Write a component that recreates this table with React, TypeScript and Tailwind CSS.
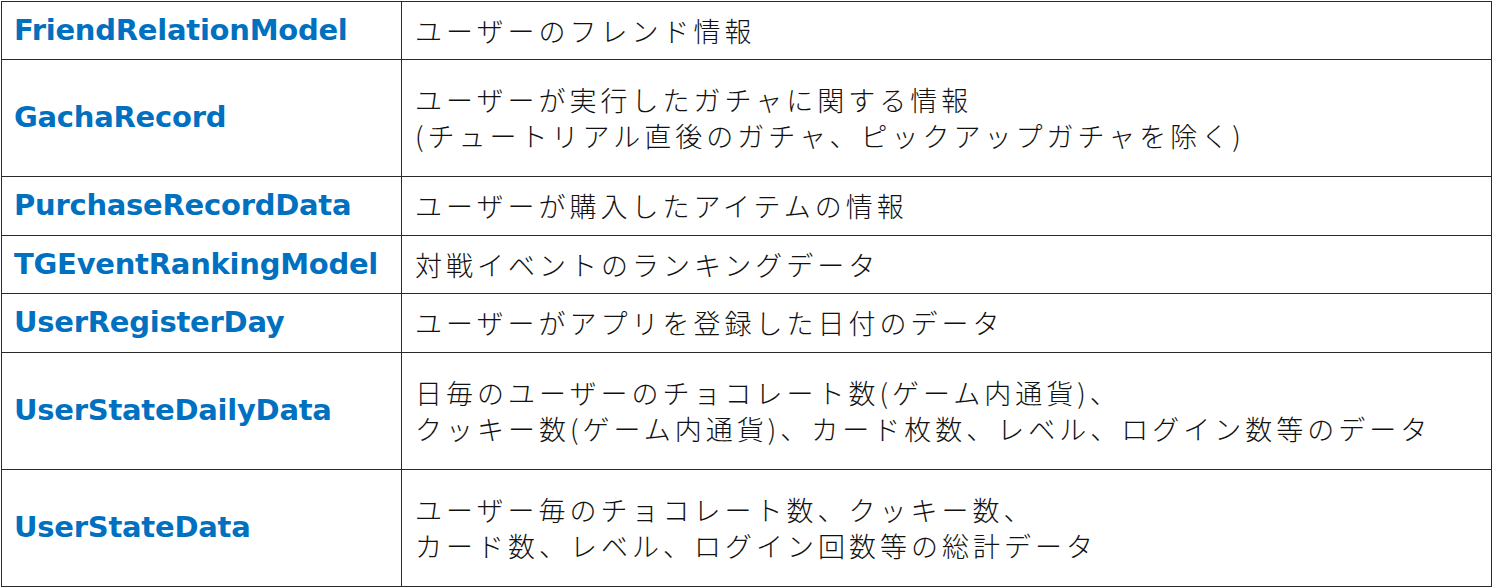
const rows: { name: string; lines: string[]; h: string }[] = [
  { name: "FriendRelationModel", lines: ["ユーザーのフレンド情報"], h: "h-[58px]" },
  {
    name: "GachaRecord",
    lines: ["ユーザーが実行したガチャに関する情報", "(チュートリアル直後のガチャ、ピックアップガチャを除く)"],
    h: "h-[117px]",
  },
  { name: "PurchaseRecordData", lines: ["ユーザーが購入したアイテムの情報"], h: "h-[59px]" },
  { name: "TGEventRankingModel", lines: ["対戦イベントのランキングデータ"], h: "h-[58px]" },
  { name: "UserRegisterDay", lines: ["ユーザーがアプリを登録した日付のデータ"], h: "h-[59px]" },
  {
    name: "UserStateDailyData",
    lines: ["日毎のユーザーのチョコレート数(ゲーム内通貨)、", "クッキー数(ゲーム内通貨)、カード枚数、レベル、ログイン数等のデータ"],
    h: "h-[117px]",
  },
  {
    name: "UserStateData",
    lines: ["ユーザー毎のチョコレート数、クッキー数、", "カード数、レベル、ログイン回数等の総計データ"],
    h: "h-[116px]",
  },
];

export default function App() {
  return (
    <div className="w-[1493px] h-[588px] bg-white pt-px pl-px">
      <div className="w-[1491px] border border-[#2a2a2a] flex flex-col">
        {rows.map((r, i) => (
          <div
            key={r.name}
            className={`grid grid-cols-[400px_1fr] ${r.h} ${i < rows.length - 1 ? "border-b border-[#2a2a2a]" : ""}`}
          >
            <div className="border-r border-[#2a2a2a] flex items-center pl-[12px]">
              <span className="font-['DejaVu_Sans',sans-serif] font-bold text-[29px] tracking-[-0.25px] text-[#0070c0]">
                {r.name}
              </span>
            </div>
            <div className="flex flex-col justify-center pl-[13px]">
              {r.lines.map((l) => (
                <p
                  key={l}
                  className="font-['Noto_Sans_CJK_JP',sans-serif] font-light text-[27px] leading-[36px] tracking-[4px] text-[#111] whitespace-nowrap"
                >
                  {l}
                </p>
              ))}
            </div>
          </div>
        ))}
      </div>
    </div>
  );
}
